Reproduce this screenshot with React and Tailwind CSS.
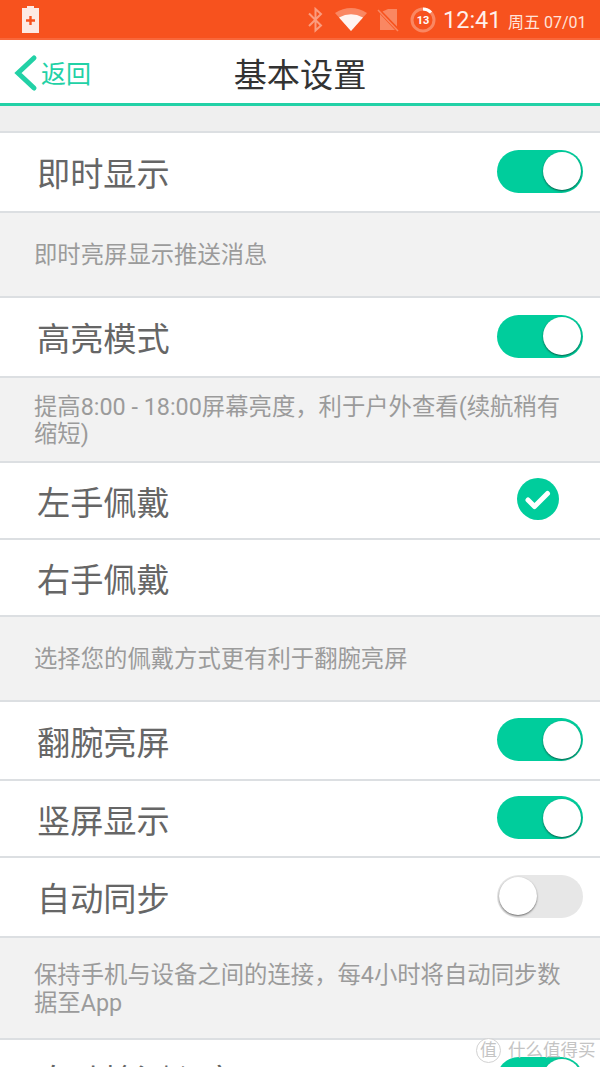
import React from "react";

const Line = () => <div className="h-[2px] shrink-0 bg-[#dcdfe2]" />;

const Toggle = ({ on }) => (
  <div
    className={`mb-[2px] flex h-[43px] w-[86px] items-center rounded-full px-[2px] ${
      on ? "justify-end bg-[#00cd9c]" : "justify-start bg-[#e7e7e7]"
    }`}
  >
    <div className="size-[38px] rounded-full bg-white shadow-[0_1px_2px_rgba(0,0,0,0.55)]" />
  </div>
);

const Check = () => (
  <svg className="mr-[24px] mb-[3px] size-[42px]" viewBox="0 0 42 42">
    <circle cx="21" cy="21" r="21" fill="#00cd9c" />
    <path
      d="M11 22L17.5 28.5L30.5 15.500"
      fill="none"
      stroke="#fff"
      strokeWidth="5"
      strokeLinecap="round"
      strokeLinejoin="round"
    />
  </svg>
);

const Row = ({ label, height, children }) => (
  <>
    <div
      className={`flex shrink-0 items-center justify-between bg-white pr-[17px] pl-[37px] ${height}`}
    >
      <span className="pt-[6px] text-[33.2px] leading-[40px] whitespace-nowrap text-[#666]">
        {label}
      </span>
      {children}
    </div>
    <Line />
  </>
);

const Note = ({ height, children }) => (
  <>
    <div
      className={`flex shrink-0 flex-col justify-center pt-[3px] pl-[34px] text-[23.35px] leading-[27.5px] whitespace-nowrap text-[#9b9b9b] ${height}`}
    >
      {children}
    </div>
    <Line />
  </>
);

const StatusBar = () => (
  <div className="flex h-[40px] shrink-0 items-center border-b-2 border-[#f9673a] bg-[#f7521e] text-white">
    <svg className="mt-[1px] ml-[21px] h-[27px] w-[19px]" viewBox="0 0 19 27">
      <path d="M1 2H6V0H13V2H18V27H1Z" fill="#fdeae4" />
      <path d="M9.5 10V19M5 14.5H14" stroke="#f7521e" strokeWidth="2.4" />
    </svg>
    <svg className="mt-[2px] ml-[267px] h-[26px] w-[130px]" viewBox="307 7 130 26">
      <path
        d="M309 13.5L321 25.5L315.5 30.5V9L321 14L309 26"
        fill="none"
        stroke="#fb9c7e"
        strokeWidth="2"
      />
      <path d="M335 13Q351 3 367 13L351 31Z" fill="#fa8762" />
      <path d="M339 17.5Q351 11 363 17.5L351 31Z" fill="#fff4f0" />
      <path d="M388 9H397V26.5L382.5 11.500Z" fill="#fa8762" />
      <path d="M380 14V30H395Z" fill="#fa8762" />
      <path d="M378 10L398 31" stroke="#fa8762" strokeWidth="1.500" />
      <circle cx="423" cy="20" r="11" fill="none" stroke="#fa8762" strokeWidth="3" />
      <path d="M423 9A11 11 0 0 1 431 12.500" fill="none" stroke="#fff" strokeWidth="3" />
      <text x="423" y="24.2" fill="#fff" fontSize="11" fontWeight="700" textAnchor="middle">
        13
      </text>
    </svg>
    <span className="mt-[3px] ml-[6px] w-[59px] text-[23.5px] leading-none whitespace-nowrap text-[#fff0eb]">
      12:41
    </span>
    <span className="mt-[8px] ml-[6px] text-[16px] leading-none whitespace-nowrap text-[#ffe3da]">
      周五 07/01
    </span>
  </div>
);

const Header = () => (
  <div className="relative flex h-[66px] shrink-0 items-center justify-center border-b-[3px] border-[#22d1a6] bg-white">
    <div className="absolute top-[14px] left-[14px] flex h-[38px] items-center text-[#22d1a6]">
      <svg className="h-[38px] w-[24px]" viewBox="0 0 24 38">
        <path
          d="M20 4L4 19L20 34"
          fill="none"
          stroke="currentColor"
          strokeWidth="5"
          strokeLinecap="round"
        />
      </svg>
      <span className="mt-[2px] ml-[3px] text-[25px] leading-none whitespace-nowrap">返回</span>
    </div>
    <h1 className="pt-[8px] text-[33.2px] leading-none text-[#333]">基本设置</h1>
  </div>
);

const Watermark = () => (
  <div className="absolute top-[1037px] left-[476px] flex items-center text-[#c4c4c4]">
    <span className="flex size-[25px] items-center justify-center rounded-full border border-[#d2d2d2] bg-white text-[17px] leading-none">
      值
    </span>
    <span className="ml-[7px] text-[17.5px] leading-[26px] whitespace-nowrap">什么值得买</span>
  </div>
);

export default function App() {
  return (
    <div className="relative flex h-[1067px] w-[600px] flex-col overflow-hidden bg-[#f2f2f2] font-[Roboto,'Noto_Sans_CJK_SC',sans-serif]">
      <StatusBar />
      <Header />
      <div className="h-[25px] shrink-0 bg-[#efefef]" />
      <Line />
      <Row label="即时显示" height="h-[78px]">
        <Toggle on />
      </Row>
      <Note height="h-[83px]">即时亮屏显示推送消息</Note>
      <Row label="高亮模式" height="h-[78px]">
        <Toggle on />
      </Row>
      <Note height="h-[83px]">
        <p>提高8:00 - 18:00屏幕亮度，利于户外查看(续航稍有</p>
        <p>缩短)</p>
      </Note>
      <Row label="左手佩戴" height="h-[75px]">
        <Check />
      </Row>
      <Row label="右手佩戴" height="h-[75px]" />
      <Note height="h-[83px]">选择您的佩戴方式更有利于翻腕亮屏</Note>
      <Row label="翻腕亮屏" height="h-[77px]">
        <Toggle on />
      </Row>
      <Row label="竖屏显示" height="h-[75px]">
        <Toggle on />
      </Row>
      <Row label="自动同步" height="h-[78px]">
        <Toggle />
      </Row>
      <Note height="h-[100px]">
        <p>保持手机与设备之间的连接，每4小时将自动同步数</p>
        <p>据至App</p>
      </Note>
      <Row label="自动检测心率" height="h-[78px]">
        <Toggle on />
      </Row>
      <Watermark />
    </div>
  );
}
